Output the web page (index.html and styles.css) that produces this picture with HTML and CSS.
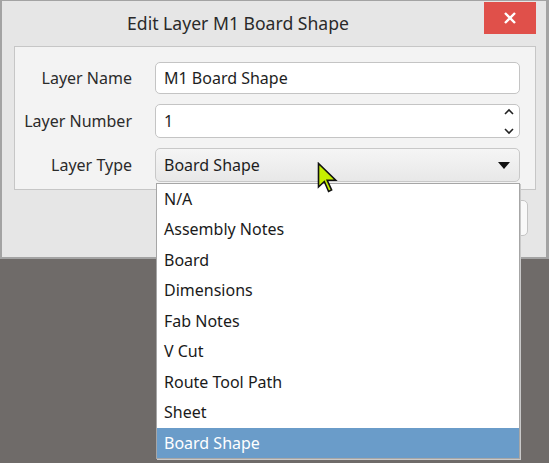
FILE: index.html
```html
<!DOCTYPE html>
<html>
<head>
<meta charset="utf-8">
<link rel="stylesheet" href="styles.css">
</head>
<body>
<div class="window">
  <div class="titlebar">
    <div class="title">Edit Layer M1 Board Shape</div>
    <div class="close">
      <svg width="14" height="14" viewBox="0 0 14 14"><path d="M2 2 L12 12 M12 2 L2 12" stroke="#fff" stroke-width="2.4" fill="none"/></svg>
    </div>
  </div>
  <div class="panel">
    <div class="form">
      <div class="lbl">Layer Name</div>
      <div class="field input">M1 Board Shape</div>
      <div class="lbl">Layer Number</div>
      <div class="field input spin">
        <span class="value">1</span>
        <span class="spinner">
          <svg width="12" height="8" viewBox="0 0 12 8"><path d="M2 6 L6 2 L10 6" stroke="#222" stroke-width="1.6" fill="none"/></svg>
          <svg width="12" height="8" viewBox="0 0 12 8"><path d="M2 2 L6 6 L10 2" stroke="#222" stroke-width="1.6" fill="none"/></svg>
        </span>
      </div>
      <div class="lbl">Layer Type</div>
      <div class="field combo">
        <span class="value">Board Shape</span>
        <svg class="caret" width="12" height="7" viewBox="0 0 12 7"><path d="M0 0 H12 L6 7 Z" fill="#111"/></svg>
        <svg class="pointer" width="22" height="32" viewBox="0 0 22 32"><path d="M1.5 1.5 L1.5 25 L7.3 19.5 L11.6 29.5 L14.6 28 L10.2 18.3 L18.7 18.3 Z" fill="#c6f000" stroke="#111" stroke-width="1.6" stroke-linejoin="miter"/></svg>
        <ul class="list">
          <li>N/A</li>
          <li>Assembly Notes</li>
          <li>Board</li>
          <li>Dimensions</li>
          <li>Fab Notes</li>
          <li>V Cut</li>
          <li>Route Tool Path</li>
          <li>Sheet</li>
          <li class="selected">Board Shape</li>
        </ul>
      </div>
    </div>
  </div>
  <div class="footer">
    <div class="btn"></div>
    <div class="btn"></div>
  </div>
</div>
</body>
</html>
```

FILE: styles.css
```css
html, body {
  margin: 0;
  padding: 0;
}
body {
  width: 549px;
  height: 463px;
  background: #6f6b69;
  font-family: "Noto Sans", "Open Sans", sans-serif;
  color: #1e1e1e;
  overflow: hidden;
}
.window {
  box-sizing: border-box;
  width: 549px;
  height: 259px;
  background: #e6e6e6;
  border-style: solid;
  border-color: #a3a3a3;
  border-width: 1px 3px 2px 2px;
  display: flex;
  flex-direction: column;
}
.titlebar {
  height: 45px;
  display: flex;
  align-items: flex-start;
}
.title {
  flex: 1;
  height: 45px;
  line-height: 44px;
  text-align: center;
  font-size: 17.6px;
  color: #2a2a2a;
  padding-right: 10px;
}
.close {
  width: 52px;
  height: 32px;
  margin: 1px 10px 0 0;
  background: #e0504a;
  display: flex;
  align-items: center;
  justify-content: center;
}
.panel {
  margin: 0 10px 0 12px;
  background: #f3f3f3;
  border: 1px solid #c6c6c6;
  height: 144px;
  box-sizing: border-box;
}
.form {
  display: grid;
  grid-template-columns: 117px 365px;
  column-gap: 23px;
  grid-template-rows: 32px 34px 34px;
  row-gap: 10px;
  padding-top: 15px;
}
.lbl {
  text-align: right;
  font-size: 16px;
  align-self: center;
  color: #2b2b2b;
}
.field {
  box-sizing: border-box;
  border: 1px solid #c4c4c4;
  border-radius: 5px;
  display: flex;
  align-items: center;
  padding-left: 8px;
  font-size: 16px;
  position: relative;
}
.input {
  background: #fff;
}
.spin .value {
  flex: 1;
}
.spinner {
  display: flex;
  flex-direction: column;
  gap: 11px;
  margin-right: 4px;
}
.spinner svg {
  display: block;
}
.combo {
  background: linear-gradient(#f5f5f5, #e8e8e8);
  border-color: #c8c8c8;
}
.combo .value {
  flex: 1;
}
.caret {
  margin-right: 9px;
}
.pointer {
  position: absolute;
  left: 161px;
  top: 13px;
  z-index: 3;
}
.list {
  position: absolute;
  left: 0px;
  right: -1px;
  top: 34px;
  margin: 0;
  padding: 0;
  list-style: none;
  background: #fff;
  border: 1px solid #a6a6a6;
  box-shadow: 1px 1px 0 #c9c9c9;
  z-index: 2;
}
.list li {
  height: 30.45px;
  line-height: 30px;
  padding-left: 7px;
  font-size: 16px;
  color: #1a1a1a;
}
.list li.selected {
  background: #6a9cc9;
  color: #fff;
}
.footer {
  flex: 1;
  display: flex;
  justify-content: flex-end;
  align-items: flex-start;
  gap: 10px;
  padding: 10px 18px 0 0;
}
.btn {
  width: 90px;
  height: 36px;
  box-sizing: border-box;
  background: #f9f9f9;
  border: 1px solid #c4c4c4;
  border-radius: 5px;
}
```
